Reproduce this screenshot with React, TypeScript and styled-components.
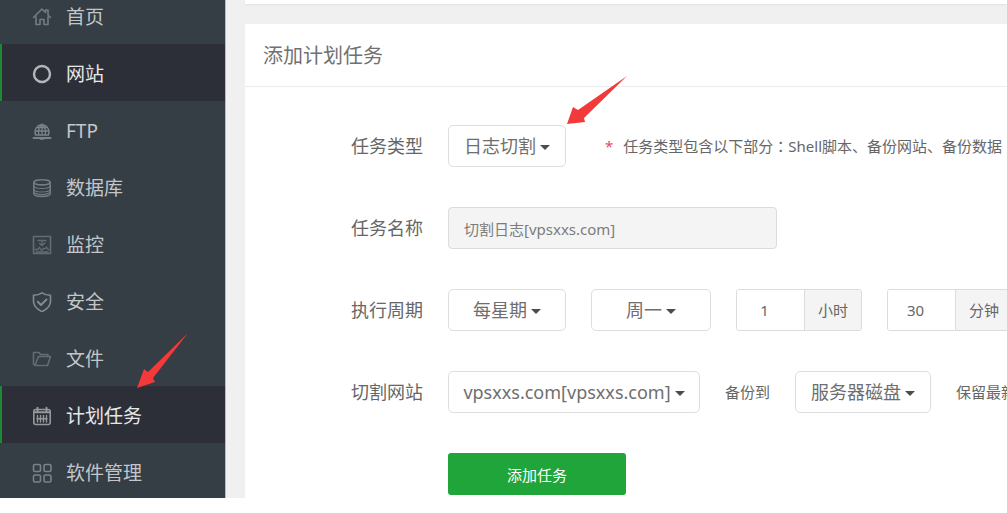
import React from "react";
import styled, { createGlobalStyle, css } from "styled-components";

const GlobalStyle = createGlobalStyle`
  *, *::before, *::after { box-sizing: border-box; }
  body {
    margin: 0;
    background: #fff;
    color: #666;
    font-family: "Noto Sans", "Noto Sans CJK SC", sans-serif;
    font-size: 18px;
    line-height: 24px;
  }
  button, input, select { font-family: inherit; color: inherit; }
`;

const Shell = styled.div`
  display: grid;
  grid-template-columns: 226px minmax(0, 1fr);
  margin-bottom: 15px;
  background: #f0f0f0;
  overflow: hidden;
`;

const Sidebar = styled.nav`
  background: #353d45;
  border-right: 1px solid #b9bbbd;
  overflow: hidden;
`;

const Menu = styled.ul`
  list-style: none;
  margin: -13px 0 -2px;
  padding: 0;
`;

const MenuItem = styled.li`
  position: relative;
`;

const MenuLink = styled.a<{ $active?: boolean }>`
  display: flex;
  align-items: center;
  gap: 14px;
  height: 57px;
  padding: 3px 16px 0 30px;
  border-left: 2px solid transparent;
  color: #c3c7ca;
  font-size: 19px;
  text-decoration: none;
  ${(p) =>
    p.$active &&
    css`
      background: #2c2f38;
      border-left-color: #1c8a35;
      color: #e6e7e8;
    `}
`;

const MenuIcon = styled.svg<{ $tone: string }>`
  flex: none;
  width: 20px;
  height: 20px;
  fill: none;
  stroke: ${(p) => p.$tone};
  stroke-width: 1.6;
  stroke-linecap: round;
  stroke-linejoin: round;
`;

const Main = styled.main`
  min-width: 0;
  padding-left: 19px;
  overflow: hidden;
`;

const PreviousPanel = styled.div`
  height: 4px;
  margin-bottom: 20px;
  background: #fff;
  box-shadow: 0 1px 2px #e2e2e2;
`;

const Panel = styled.section`
  background: #fff;
  min-height: calc(100% - 24px);
`;

const PanelTitle = styled.h1`
  margin: 0;
  padding: 20px 18px 18px;
  border-bottom: 1px solid #ececec;
  color: #707070;
  font-size: 20px;
  font-weight: 400;
  line-height: 24px;
`;

const TaskForm = styled.form`
  display: flex;
  flex-direction: column;
  gap: 40px;
  padding: 38px 0 3px;
`;

const FormRow = styled.div`
  display: flex;
  align-items: center;
  gap: 25px;
  height: 42px;
  white-space: nowrap;
`;

const FieldLabel = styled.label`
  flex: 0 0 178px;
  text-align: right;
`;

const SelectBox = styled.div<{ $width: number }>`
  position: relative;
  flex: 0 0 ${(p) => p.$width}px;
  display: flex;
  align-items: center;
  justify-content: center;
  gap: 4px;
  height: 42px;
  border: 1px solid #dedede;
  border-radius: 5px;
  background: #fff;
`;

const Select = styled.select`
  appearance: none;
  field-sizing: content;
  margin: 0;
  padding: 0;
  border: 0;
  background: none;
  outline: none;
  color: #6e6e6e;
  font-size: 18px;
  line-height: 24px;
`;

const CaretIcon = styled.svg`
  flex: none;
  width: 10px;
  height: 5px;
  margin-top: 3px;
  fill: #4c4c4c;
  pointer-events: none;
`;

const NameInput = styled.input`
  flex: 0 0 329px;
  height: 42px;
  padding: 0 15px;
  border: 1px solid #dcdcdc;
  border-radius: 4px;
  background: #f4f4f4;
  color: #7c7c7c;
  font-size: 15px;
  outline: none;
`;

const Group = styled.div`
  flex: none;
  display: flex;
  height: 42px;
  border: 1px solid #dcdcdc;
  border-radius: 3px;
  overflow: hidden;
`;

const NumberInput = styled.input`
  width: 68px;
  padding: 0 12px 0 0;
  border: 0;
  border-right: 1px solid #dcdcdc;
  background: #fff;
  font-size: 15px;
  text-align: center;
  outline: none;
`;

const Unit = styled.label`
  width: 56px;
  background: #f4f4f4;
  font-size: 15px;
  line-height: 40px;
  text-align: center;
`;

const InlineLabel = styled.label`
  font-size: 15px;
`;

const Hint = styled.p`
  display: flex;
  gap: 10px;
  margin: 0 0 0 14px;
  font-size: 15px;
`;

const Required = styled.span`
  color: #e0486a;
`;

const Colon = styled.span`
  font-family: "Noto Sans CJK TC", sans-serif;
`;

const SubmitButton = styled.button`
  width: 178px;
  height: 42px;
  margin-left: 203px;
  border: 0;
  border-radius: 3px;
  background: #20a53a;
  color: #fff;
  font-size: 15px;
  cursor: pointer;
`;

const Pointer = styled.svg<{ $left: number; $top: number }>`
  position: absolute;
  z-index: 1;
  left: ${(p) => p.$left}px;
  top: ${(p) => p.$top}px;
  fill: #f23a3a;
  pointer-events: none;
`;

const icons: Record<string, React.ReactNode> = {
  home: (
    <path d="M1.5 10.5 10 2l3.5 3.5V3h2.500v5l2.500 2.500M4 10v7.500h4V12.500h4v5h4V10" />
  ),
  site: <circle cx="10" cy="10" r="8" strokeWidth="2.400" />,
  ftp: (
    <>
      <path
        d="M3.500 14a7 7.500 0 1 1 13 0zM10 3v11M6.800 14C6 9.500 7.500 5.500 10 3.500c2.500 2 4 6 3.200 10.500M3.500 10h13M4.800 6.500h10.400"
        strokeWidth="1.300"
      />
      <path d="M1.500 17h17M8.500 17.800h3" strokeWidth="2" />
    </>
  ),
  database: (
    <>
      <ellipse cx="10" cy="4.300" rx="8.200" ry="2.600" />
      <path d="M1.800 4.300v11.200c0 1.800 3.800 2.900 8.200 2.900s8.200-1.100 8.200-2.900V4.300" />
      <path
        d="M2 8.500c1 1.400 4.500 2 8 2s7-.6 8-2M2 12c1 1.400 4.500 2 8 2s7-.6 8-2M3 15c2 1.200 4.500 1.500 7 1.500s5-.3 7-1.500"
        strokeWidth="1.200"
      />
    </>
  ),
  monitor: (
    <>
      <path d="M1.500 1.500h17v17h-17z" />
      <path
        d="M6 5.500h8M10 5.500v5M7.500 8.500l2.500 2 3-2.500M3 14.500h3l1.500-2 2 3 2-2h2l1-1.500 1.500 2.500h1M4 17h12"
        strokeWidth="1.300"
      />
    </>
  ),
  shield: (
    <>
      <path d="M10 .8c2.500 1.600 5.200 2.300 8.500 2.400v6.400c0 4.500-3.500 7.600-8.500 10-5-2.400-8.500-5.500-8.500-10V3.200C4.800 3.100 7.500 2.400 10 .8z" />
      <path d="m5.800 9.800 3.200 3.200 5.500-5.500" strokeWidth="2" />
    </>
  ),
  folder: (
    <path d="M3 16.500h12.500l3-9H6.500L3 16.500zm0 0-1.500-1.500V3.500h5.500l1.500 2h7.500v2" />
  ),
  calendar: (
    <>
      <rect x="1.800" y="3.500" width="16.400" height="15" rx="2" />
      <path d="M2.500 6.200h15M5.500 1.800v3M14.500 1.800v3" strokeWidth="2" />
      <path
        d="M5.500 9.500v6.500M8.500 9.500v6.500M11.500 9.500v6.500M14.500 9.500v6.500M5 12.700h10"
        strokeWidth="1.400"
      />
    </>
  ),
  apps: (
    <>
      <rect x="1.500" y="1.500" width="7" height="7" rx="1.500" />
      <rect x="12" y="1.500" width="7" height="7" rx="1.500" />
      <rect x="1.500" y="12" width="7" height="7" rx="1.500" />
      <rect x="12" y="12" width="7" height="7" rx="1.500" />
    </>
  ),
};

const menu = [
  { icon: "home", text: "首页", tone: "#737b82" },
  { icon: "site", text: "网站", tone: "#b4b6b9", active: true },
  { icon: "ftp", text: "FTP", tone: "#7b8288" },
  { icon: "database", text: "数据库", tone: "#747c83" },
  { icon: "monitor", text: "监控", tone: "#646c73" },
  { icon: "shield", text: "安全", tone: "#838a90" },
  { icon: "folder", text: "文件", tone: "#646c73" },
  { icon: "calendar", text: "计划任务", tone: "#96989c", active: true, pointer: true },
  { icon: "apps", text: "软件管理", tone: "#7b8288" },
];

type DropdownProps = {
  id: string;
  width: number;
  value: string;
  label?: string;
  children?: React.ReactNode;
};

function Dropdown({ id, width, value, label, children }: DropdownProps) {
  return (
    <SelectBox $width={width}>
      <Select id={id} defaultValue={value} aria-label={label}>
        <option value={value}>{value}</option>
      </Select>
      <CaretIcon viewBox="0 0 10 5" aria-hidden="true">
        <path d="M0 0h10L5 5z" />
      </CaretIcon>
      {children}
    </SelectBox>
  );
}

export default function App() {
  return (
    <>
      <GlobalStyle />
      <Shell>
        <Sidebar>
          <Menu>
            {menu.map((item) => (
              <MenuItem key={item.icon}>
                <MenuLink href="#" $active={item.active}>
                  <MenuIcon viewBox="0 0 20 20" $tone={item.tone} aria-hidden="true">
                    {icons[item.icon]}
                  </MenuIcon>
                  {item.text}
                </MenuLink>
                {item.pointer && (
                  <Pointer $left={137} $top={-53} width="51" height="55" viewBox="0 0 51 55" aria-hidden="true">
                    <path d="M0 55 7 36l4 3L51 0 16 45l2 4z" />
                  </Pointer>
                )}
              </MenuItem>
            ))}
          </Menu>
        </Sidebar>
        <Main>
          <PreviousPanel />
          <Panel>
            <PanelTitle>添加计划任务</PanelTitle>
            <TaskForm onSubmit={(e) => e.preventDefault()}>
              <FormRow>
                <FieldLabel htmlFor="type">任务类型</FieldLabel>
                <Dropdown id="type" width={118} value="日志切割">
                  <Pointer $left={118} $top={-50} width="60" height="48" viewBox="0 0 60 48" aria-hidden="true">
                    <path d="M0 48 6 31l5 3L60 0 17 42l1 4z" />
                  </Pointer>
                </Dropdown>
                <Hint>
                  <Required>*</Required>
                  <span>
                    任务类型包含以下部分<Colon>：</Colon>Shell脚本、备份网站、备份数据
                  </span>
                </Hint>
              </FormRow>
              <FormRow>
                <FieldLabel htmlFor="name">任务名称</FieldLabel>
                <NameInput id="name" type="text" readOnly value="切割日志[vpsxxs.com]" />
              </FormRow>
              <FormRow>
                <FieldLabel htmlFor="cycle">执行周期</FieldLabel>
                <Dropdown id="cycle" width={118} value="每星期" />
                <Dropdown id="weekday" width={120} value="周一" label="星期" />
                <Group>
                  <NumberInput id="hour" type="text" inputMode="numeric" defaultValue="1" />
                  <Unit htmlFor="hour">小时</Unit>
                </Group>
                <Group>
                  <NumberInput id="minute" type="text" inputMode="numeric" defaultValue="30" />
                  <Unit htmlFor="minute">分钟</Unit>
                </Group>
              </FormRow>
              <FormRow>
                <FieldLabel htmlFor="site">切割网站</FieldLabel>
                <Dropdown id="site" width={252} value="vpsxxs.com[vpsxxs.com]" />
                <InlineLabel htmlFor="target">备份到</InlineLabel>
                <Dropdown id="target" width={136} value="服务器磁盘" />
                <InlineLabel as="span">保留最新</InlineLabel>
              </FormRow>
              <SubmitButton type="submit">添加任务</SubmitButton>
            </TaskForm>
          </Panel>
        </Main>
      </Shell>
    </>
  );
}
